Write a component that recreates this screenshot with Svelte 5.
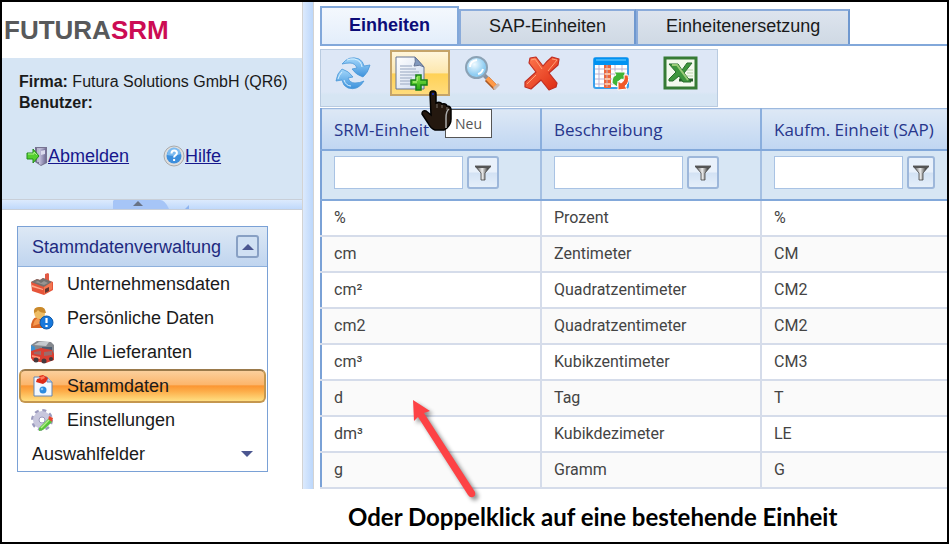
<script>
  const tabs = ['Einheiten', 'SAP-Einheiten', 'Einheitenersetzung'];
  let activeTab = $state('Einheiten');

  const tools = [
    { id: 'refresh', label: 'Aktualisieren' },
    { id: 'new', label: 'Neu', groupEnd: true },
    { id: 'search', label: 'Suchen' },
    { id: 'delete', label: 'Löschen', groupEnd: true },
    { id: 'columns', label: 'Spalten', groupEnd: true },
    { id: 'excel', label: 'Excel-Export' }
  ];

  const menu = [
    { id: 'company', label: 'Unternehmensdaten' },
    { id: 'person', label: 'Persönliche Daten' },
    { id: 'suppliers', label: 'Alle Lieferanten' },
    { id: 'master', label: 'Stammdaten' },
    { id: 'settings', label: 'Einstellungen' }
  ];
  let activeItem = $state('master');

  const columns = ['SRM-Einheit', 'Beschreibung', 'Kaufm. Einheit (SAP)'];
  const rows = [
    ['%', 'Prozent', '%'],
    ['cm', 'Zentimeter', 'CM'],
    ['cm²', 'Quadratzentimeter', 'CM2'],
    ['cm2', 'Quadratzentimeter', 'CM2'],
    ['cm³', 'Kubikzentimeter', 'CM3'],
    ['d', 'Tag', 'T'],
    ['dm³', 'Kubikdezimeter', 'LE'],
    ['g', 'Gramm', 'G']
  ];
</script>

<svg class="defs" aria-hidden="true">
  <defs>
    <linearGradient id="blue" x1="0" y1="0" x2="0" y2="1"><stop offset="0" stop-color="#a5d8fb" /><stop offset="1" stop-color="#3d92dc" /></linearGradient>
    <linearGradient id="red" x1="0" y1="0" x2="1" y2="1"><stop offset="0" stop-color="#ff7a50" /><stop offset="1" stop-color="#dc2810" /></linearGradient>
    <linearGradient id="green" x1="0" y1="0" x2="0" y2="1"><stop offset="0" stop-color="#8be84e" /><stop offset="1" stop-color="#25a812" /></linearGradient>
    <linearGradient id="sheet" x1="0" y1="0" x2="1" y2="1"><stop offset="0" stop-color="#ffffff" /><stop offset="1" stop-color="#ccd9ee" /></linearGradient>
    <linearGradient id="steel" x1="0" y1="0" x2="1" y2="0"><stop offset="0" stop-color="#c9c6e2" /><stop offset="1" stop-color="#6f6b93" /></linearGradient>
    <radialGradient id="glass" cx="0.4" cy="0.35"><stop offset="0" stop-color="#f0faff" /><stop offset="1" stop-color="#8ecdf2" /></radialGradient>
    <linearGradient id="funnel" x1="0" y1="0" x2="1" y2="0"><stop offset="0" stop-color="#333" /><stop offset="0.45" stop-color="#eee" /><stop offset="0.8" stop-color="#444" /></linearGradient>
  </defs>
</svg>

<div class="page">
  <div class="app">
    <aside>
      <header class="logo"><span>FUTURA</span><b>SRM</b></header>
      <section class="account">
        <p><b>Firma:</b> Futura Solutions GmbH (QR6)</p>
        <p><b>Benutzer:</b></p>
        <div class="links">
          <a href="#abmelden">
            <svg width="22" height="22" viewBox="0 0 22 22" aria-hidden="true">
              <path d="M9 2h12v16l-6 3-6-4z" fill="#777391" />
              <path d="M11 3h9v14h-9z" fill="#bab7d0" />
              <path d="M13 4l7-1v14l-5 3-2-1z" fill="url(#steel)" />
              <path d="M15 6l4-1v4l-4 1z" fill="#dcdbee" />
              <path d="M1 8h6V4l6 7-6 7v-4H1z" fill="#55cf2f" stroke="#238b1d" />
              <path d="M2 9h6V7l3 3" fill="none" stroke="#adf38a" />
            </svg>Abmelden
          </a>
          <a href="#hilfe">
            <svg width="22" height="22" viewBox="0 0 22 22" aria-hidden="true">
              <circle cx="11" cy="11" r="10" fill="#dedede" stroke="#aaa" />
              <circle cx="11" cy="11" r="7.500" fill="#3d8fdd" />
              <path d="M4 10a7 7 0 0 1 14-1q-7 3-14 1" fill="#7dbbf0" />
              <path d="M8.500 8.500q0-3 2.700-3t2.700 2.500q0 1.500-1.500 2.300-1.300.7-1.300 2.200M11.100 14v2" fill="none" stroke="#fff" stroke-width="2" />
            </svg>Hilfe
          </a>
        </div>
      </section>
      <div class="hsplit">
        <svg width="78" height="9" viewBox="0 0 78 9" aria-hidden="true">
          <path d="M0 9V1l1-1h46q5 0 9 9z" fill="#a6c5f7" />
          <path d="M20 6l5-5 5 5z" fill="#687386" />
          <path d="M72 9l4-4v4z" fill="#8eb4f0" />
        </svg>
      </div>
      <nav class="panel">
        <div class="panel-head">
          <h2>Stammdatenverwaltung</h2>
          <button class="collapse" aria-label="Einklappen"><svg width="12" height="6" viewBox="0 0 12 6"><path d="M0 6l6-6 6 6z" fill="#4b5690" /></svg></button>
        </div>
        {#each menu as item}
          <button class="item" class:active={activeItem === item.id} onclick={() => (activeItem = item.id)}>
            <svg width="24" height="24" viewBox="0 0 24 24" aria-hidden="true">
              {#if item.id === 'company'}
                <path d="M15 2l3-1 1 1v9h-4z" fill="#e25a45" />
                <path d="M1 10l6-3 3 1 3-2 10 4v8l-9 5L2 19z" fill="#e6553a" />
                <path d="M1 10l6-3 3 1 3-2 9 4-8 5z" fill="#75716f" />
                <path d="M5 10l3-1 3 2 3-2 4 2-4 2z" fill="#999591" />
                <path d="M14 15l8-5v7l-8 5z" fill="#f27650" />
                <path d="M15 17l4-2v4l-4 2z" fill="#61352e" />
                <path d="M2 13l11 4v1L2 15z" fill="#ffab8d" />
              {:else if item.id === 'person'}
                <path d="M1 22q0-10 6-11h6q5 2 6 11z" fill="#d86525" />
                <path d="M3 20q1-7 5-8l4 5z" fill="#f49a51" />
                <path d="M4 7q0-6 6-6t5 6q0 6-5 6T4 7z" fill="#eebd65" />
                <path d="M4 7q-1-6 5-6 6-1 7 6-6 0-8-3-1 2-4 3z" fill="#c9892c" />
                <circle cx="16.500" cy="16.500" r="6.500" fill="#1778dc" stroke="#0b58ab" />
                <path d="M16.500 12v5M16.500 19v2" stroke="#fff" stroke-width="2.200" />
              {:else if item.id === 'suppliers'}
                <path d="M1 5l6-4 14 1 3 3v9H1z" fill="#85888e" />
                <path d="M4 5l5-3h10l-3 4z" fill="#c5c9ce" />
                <path d="M1 5l4 2v9l-4-2z" fill="#3c91d2" />
                <path d="M12 7h10v3H12z" fill="#4d5d72" />
                <path d="M1 11l10-3 11 2 2 4v6l-8 3-6-1-7-1-2-3z" fill="#d93f32" />
                <path d="M4 12l7-1v4l-7-1zM14 12l8-1v4l-8 1z" fill="#9b6b6b" />
                <path d="M2 15l8 2v2l-8-2z" fill="#ff9275" />
                <circle cx="6" cy="20" r="2.500" fill="#45393d" />
                <circle cx="14" cy="21" r="2.500" fill="#45393d" />
                <circle cx="21" cy="19" r="2" fill="#45393d" />
              {:else if item.id === 'master'}
                <path d="M4 3h13l5 5v14H4z" fill="#f3f8fe" stroke="#6587b5" />
                <path d="M17 3v5h5" fill="#b9cde9" stroke="#6587b5" />
                <path d="M9 2l4-1 5 3-2 4-3 2-7-2 1-3 3-1z" fill="#dd2b17" />
                <path d="M10 3l4-1 1 2-4 2z" fill="#ff795b" />
                <circle cx="13" cy="16" r="3.500" fill="#2b8be0" />
                <circle cx="12" cy="15" r="1.300" fill="#87c8fa" />
              {:else}
                <circle cx="12" cy="12" r="9" fill="none" stroke="#9b9abd" stroke-width="4" stroke-dasharray="3.700 3.370" />
                <circle cx="12" cy="12" r="6" fill="none" stroke="#c8c7dd" stroke-width="6" />
                <circle cx="12" cy="12" r="3" fill="#fff" stroke="#9a99bb" />
                <path d="M19 8l4 2-1 4-4-2z" fill="#e64830" />
                <path d="M9 20l9-9 4 3-9 8-4 1z" fill="#59c43a" />
                <path d="M11 20l8-8" stroke="#b3ee8a" stroke-width="1.500" />
              {/if}
            </svg>
            {item.label}
          </button>
        {/each}
        <button class="item group">
          Auswahlfelder
          <svg width="12" height="6" viewBox="0 0 12 6" aria-hidden="true"><path d="M0 0h12L6 6z" fill="#4b5690" /></svg>
        </button>
      </nav>
    </aside>
    <div class="vsplit"></div>
    <main>
      <div class="tabs" role="tablist">
        {#each tabs as tab}
          <button role="tab" aria-selected={activeTab === tab} class:active={activeTab === tab} onclick={() => (activeTab = tab)}>{tab}</button>
        {/each}
      </div>
      <div class="toolbar" role="toolbar">
        {#each tools as tool}
          <button class:hot={tool.id === 'new'} class:group-end={tool.groupEnd} aria-label={tool.label}>
            <svg width="36" height="36" viewBox="0 0 36 36" aria-hidden="true">
              {#if tool.id === 'refresh'}
                <path d="M7 9Q14 0 24 4q4 2 5 7l6-1q-2 8-7 12-7-2-11-8l5-1q-2-5-7-5-4 0-8 1z" fill="url(#blue)" stroke="#4b98d8" stroke-width="0.800" />
                <path d="M29 26q-6 10-16 7-5-2-6-8l-6 1q1-8 6-12 7 2 11 8l-5 1q2 5 7 5 5 0 9-2z" fill="url(#blue)" stroke="#4b98d8" stroke-width="0.800" />
                <path d="M12 5q8-3 13 2 2 3 2 5M7 17q-3 3-4 7M9 25q2 6 7 6" fill="none" stroke="#d8f1ff" />
              {:else if tool.id === 'new'}
                <path d="M1 2h19l9 10v22H1z" fill="url(#sheet)" stroke="#657494" />
                <path d="M20 2l9 10q-4-3-10-1 2-4 1-9z" fill="#8199be" stroke="#657494" />
                <path d="M5 11h12M5 14h16M5 17h19M5 20h16M5 23h12M5 26h12M5 29h11" stroke="#b3bfd2" stroke-width="1.500" />
                <path d="M21 20h5v5h6v5h-6v5h-5v-5h-5v-5h5z" fill="url(#green)" stroke="#188019" stroke-width="1.500" />
                <path d="M22 26v-4M18 27h4" stroke="#ccff93" />
              {:else if tool.id === 'search'}
                <path d="M20 20l5 5" stroke="#8c9099" stroke-width="4" />
                <path d="M23 24l9 9" stroke="#aa5a25" stroke-width="6" />
                <path d="M23 23l9 9" stroke="#ff9a48" stroke-width="4" />
                <path d="M30 34l5-5" stroke="#c8bbb5" stroke-width="3" />
                <circle cx="12.500" cy="12.500" r="10.500" fill="url(#glass)" stroke="#8ba2b5" stroke-width="2" />
                <path d="M6 12q0-6 7-7M19 14q-1 4-5 5" fill="none" stroke="#fff" stroke-width="2" />
              {:else if tool.id === 'delete'}
                <path d="M6 3l6-1q3 4 7 9 4-5 9-9l7 2-1 6-9 8 8 10-1 4-7 3-8-10-10 9-6-2v-5l11-10L5 8z" fill="url(#red)" stroke="#bf2d22" stroke-linejoin="round" stroke-width="1.200" />
                <path d="M7 5l4-1 7 10M28 4l5 1-9 11M3 29l9-9" fill="none" stroke="#ffa078" />
              {:else if tool.id === 'columns'}
                <rect x="1" y="3" width="34" height="30" rx="2" fill="#fff" stroke="#38a0ed" stroke-width="2" />
                <path d="M1 3h34v7H1z" fill="#0092f2" />
                <path d="M3 5h30" stroke="#73d0ff" />
                <path d="M11 10h7v23h-7z" fill="#ef6639" />
                <path d="M2 14h32M2 19h32M2 24h24M2 29h22M6 10v22M14 10v22M22 10v14M29 10v10" stroke="#bbb1d0" />
                <path d="M12 14h5M12 19h5M12 24h5M12 29h5" stroke="#ffc19e" stroke-width="2" />
                <path d="M19 28q0-7 4-8l-2-3h11v9l-3-2q-4 1-5 8z" fill="#40b437" stroke="#fff" />
                <path d="M35 20q2 8-3 11l2 3-9 1v-9l3 2q4-2 3-8z" fill="#f25a29" stroke="#fff" />
              {:else}
                <rect x="3" y="3" width="31" height="30" fill="#f4faee" stroke="#367b35" stroke-width="3" />
                <path d="M17 25h14" stroke="#275e2b" stroke-width="3" />
                <path d="M24 15h7M25 18h6M25 21h6" stroke="#b9d5a9" />
                <path d="M7 9h9l4 6 5-7h5l-8 10 7 9h-8l-4-6-6 5H7v-2l7-7z" fill="#3e963d" stroke="#286c2d" />
                <path d="M10 10h5l11 15" fill="none" stroke="#9acb78" stroke-width="2" />
              {/if}
            </svg>
            {#if tool.id === 'new'}
              <span class="tip">{tool.label}</span>
              <svg class="hand" width="34" height="42" viewBox="0 0 34 42" aria-hidden="true">
                <path d="M10 4q0-3 3-3t3 3v9q4-2 6 1 4-1 5 2 4 0 4 4v9q0 5-4 9l-3 2h-9q-4-1-7-7l-6-9q0-4 4-3l5 4z" fill="#24180f" stroke="#000" stroke-width="1.500" />
                <path d="M17 14v4M22 15v3M27 17v3" stroke="#77706b" />
                <path d="M29 19q-3 2-3 9v10" fill="none" stroke="#aaa" stroke-width="1.500" />
                <path d="M12 3h2v2h-2z" fill="#16289a" />
              </svg>
            {/if}
          </button>
        {/each}
      </div>
      <table>
        <colgroup><col class="fixed" /><col class="fixed" /><col /></colgroup>
        <thead>
          <tr>{#each columns as column}<th scope="col">{column}</th>{/each}</tr>
          <tr class="filters">
            {#each columns as column}
              <td>
                <div class="filter">
                  <input type="text" aria-label={`Filter ${column}`} />
                  <button aria-label={`${column} filtern`}>
                    <svg width="16" height="16" viewBox="0 0 16 16"><path d="M0 1h16l-6 7v7H6V8z" fill="url(#funnel)" stroke="#444" stroke-width="0.800" /><path d="M0 1h16l-1 2H1z" fill="#555" /></svg>
                  </button>
                </div>
              </td>
            {/each}
          </tr>
        </thead>
        <tbody>
          {#each rows as row}
            <tr>{#each row as cell}<td>{cell}</td>{/each}</tr>
          {/each}
        </tbody>
      </table>
    </main>
  </div>
  <footer>
    <p>Oder Doppelklick auf eine bestehende Einheit
      <svg class="arrow" width="76" height="108" viewBox="0 0 76 108" aria-hidden="true">
        <path d="M5 5l17 11-6 2 51 79q1 4-2 5-3 1-5-2L10 22l-4 4z" fill="#fd4245" />
      </svg>
    </p>
  </footer>
</div>

<style>
  :global(body) { margin: 0; background: #fff; }
  .defs { position: absolute; width: 0; height: 0; }
  .page {
    box-sizing: border-box;
    min-height: 100vh;
    border: 2px solid #000;
    background: #fff;
    color: #1a1a1a;
    font: 18px/22px "Liberation Sans", Arial, sans-serif;
  }
  button { box-sizing: border-box; margin: 0; padding: 0; font: inherit; color: inherit; cursor: pointer; }
  p, h2 { margin: 0; }
  svg { display: block; flex: none; }
  .app { display: flex; }
  aside { width: 300px; flex: none; }
  .logo { display: flex; align-items: center; height: 56px; padding-left: 2px; font-size: 26px; font-weight: bold; color: #58595b; }
  .logo b { color: #cc0c54; }
  .account { box-sizing: border-box; height: 141px; padding: 13px 17px; background: #d6e5f4; font-size: 16px; line-height: 21px; white-space: nowrap; }
  .links { display: flex; gap: 34px; margin-top: 32px; padding-left: 7px; font-size: 18px; line-height: 22px; }
  .links a { display: flex; color: #17178c; }
  .hsplit { box-sizing: border-box; height: 11px; padding-left: 111px; border: solid #c9cfd8; border-width: 1px 0; background: linear-gradient(#dceafd, #c0d9fb); }
  .panel { margin: 16px 34px 15px 15px; border: 1px solid #7aa1d6; }
  .panel-head { box-sizing: border-box; display: flex; align-items: center; justify-content: space-between; height: 40px; padding: 0 8px 0 14px; border-bottom: 1px solid #8eb0dc; background: linear-gradient(#dde8f5, #c0d5ef); }
  h2 { font-size: 18px; font-weight: normal; color: #1e2a80; }
  .collapse { display: flex; align-items: center; justify-content: center; width: 23px; height: 23px; border: 2px solid #88a0c4; border-radius: 3px; background: #d0e0f3; }
  .item { display: flex; align-items: center; gap: 13px; width: calc(100% - 2px); height: 34px; margin: 0 1px; padding: 0 10px; border: 1px solid transparent; border-radius: 6px; background: none; }
  .item.active { border: 2px solid #c5974f; border-top-color: #9b7a4b; padding: 0 9px; background: linear-gradient(#fbcf9c, #fcb66c 45%, #fb9633 50%, #fdae4a 68%, #ffdf82); }
  .group { justify-content: space-between; padding: 0 12px; }
  .vsplit { box-sizing: border-box; width: 12px; flex: none; border: solid #d3d3d3; border-width: 0 1px; background: linear-gradient(90deg, #dceafd, #bcd7fb); }
  main { flex: 1; min-width: 0; padding: 4px 0 0 6px; }
  .tabs { display: flex; align-items: flex-end; border-bottom: 2px solid #82a8da; }
  .tabs button { height: 35px; padding: 0 28px 4px; border: 2px solid #8aabda; border-right-color: #6f98cf; border-bottom: 0; background: linear-gradient(#dde4ee, #cfd9e4); white-space: nowrap; }
  .tabs .active { height: 38px; border-color: #82a8da; padding: 0 27px 2px; background: linear-gradient(#f4f8fd, #e3eefb); color: #0c0c78; font-weight: bold; }
  .toolbar { box-sizing: border-box; display: flex; width: fit-content; height: 58px; margin: 3px 0 1px; padding-left: 9px; border: 1px solid #b9cbe0; background: linear-gradient(#dde7f6 75%, #d6e5f3 80%); }
  .toolbar button { position: relative; width: 60px; height: 46px; padding: 0 4px; border: 1px solid transparent; background: none; }
  .toolbar .hot { border: 2px solid #c5a469; padding: 0 3px; background: linear-gradient(#fff6dc, #fde7ad 50%, #ffd155 52%, #ffdc7c); }
  .toolbar .group-end { margin-right: 9px; }
  .tip { position: absolute; z-index: 2; left: 53px; top: 57px; padding: 4px 9px 3px; border: 1px solid #555; background: #fff; color: #555; font: 14px/20px "Open Sans", sans-serif; }
  .hand { position: absolute; z-index: 3; left: 28px; top: 38px; }
  table { width: 100%; border-collapse: collapse; table-layout: fixed; border-left: 2px solid #7aa1d6; border-top: 1px solid #9db9de; }
  .fixed { width: 220px; }
  th { box-sizing: border-box; height: 41px; padding: 3px 12px 0; border-right: 2px solid #8aaedd; border-bottom: 2px solid #82a8da; background: linear-gradient(#dde8f5, #c0d6f2); color: #27368c; font: 17px/22px "Open Sans", sans-serif; text-align: left; white-space: nowrap; }
  td { box-sizing: border-box; height: 36px; padding: 0 12px; border-right: 2px solid #d5dcea; border-bottom: 2px solid #d5dcea; color: #444; font: 16px/20px Roboto, sans-serif; }
  th:last-child, td:last-child { border-right: 0; }
  thead td { height: 50px; border-color: #a5c0e2; border-bottom-color: #82a8da; background: #d7e6f4; }
  tbody tr:nth-child(even) { background: #fafafa; }
  .filter { display: flex; gap: 4px; padding-bottom: 4px; }
  .filter input { box-sizing: border-box; width: 129px; height: 33px; padding: 0 6px; border: 1px solid #a9c3e4; background: #fff; font: inherit; }
  .filter button { display: flex; align-items: center; justify-content: center; width: 32px; height: 33px; border: 2px solid #9db7da; border-radius: 3px; background: linear-gradient(#e9f1fb 48%, #d3e2f4 52%, #e5effa); }
  footer { display: flex; padding: 16px 0 13px 346px; color: #000; font: bold 24px/24px Lato, sans-serif; }
  footer p { position: relative; white-space: nowrap; }
  .arrow { position: absolute; left: 60px; bottom: 26px; filter: drop-shadow(3px 3px 2px rgb(0 0 0 / 45%)); }
</style>
